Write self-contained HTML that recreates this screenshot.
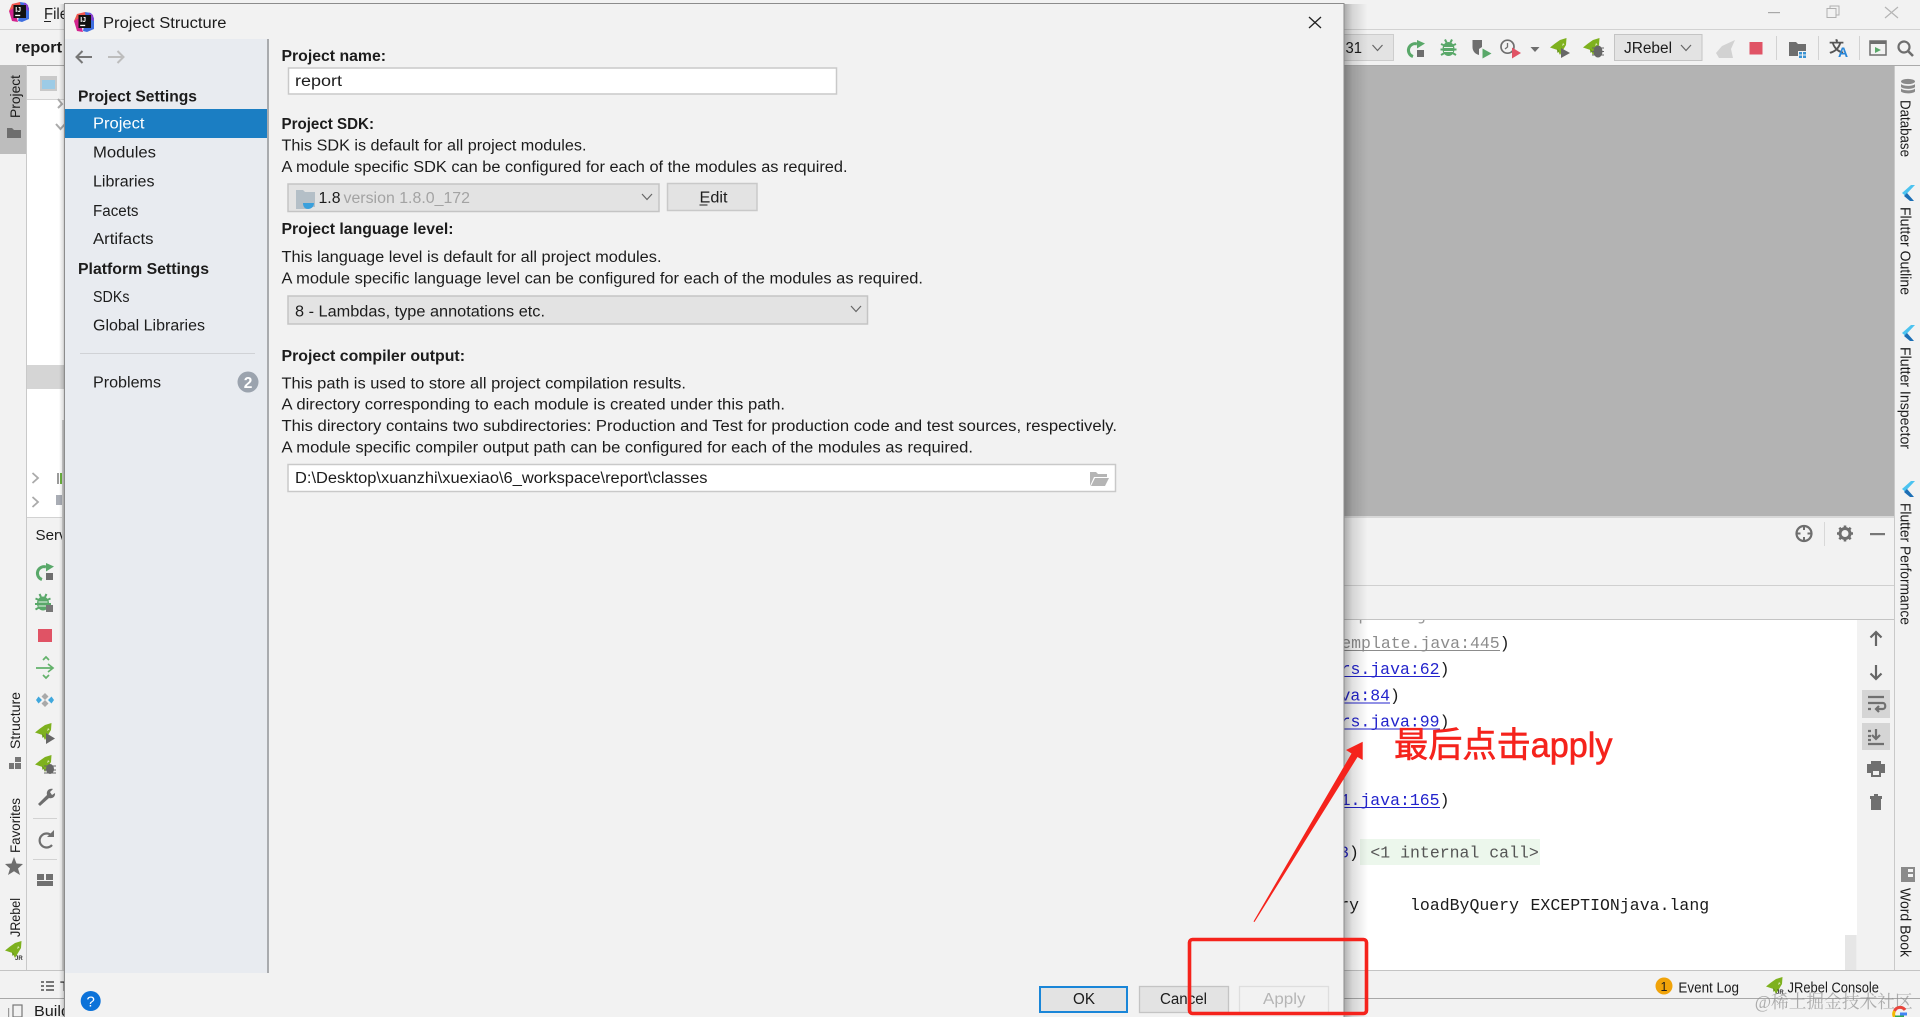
<!DOCTYPE html>
<html><head><meta charset="utf-8"><title>Project Structure</title>
<style>
html,body{margin:0;padding:0;background:#f2f2f2;overflow:hidden}
svg{display:block;font-family:"Liberation Sans","Noto Sans CJK SC",sans-serif;font-size:15.5px;fill:#1c1c1c}
.m{font-family:"Liberation Mono",monospace;font-size:16.5px}
.b{font-weight:bold}
</style></head><body>
<svg xmlns="http://www.w3.org/2000/svg" width="1920" height="1017" viewBox="0 0 1920 1017">
<defs>
<linearGradient id="sh" x1="0" x2="1" y1="0" y2="0"><stop offset="0" stop-color="#000" stop-opacity=".3"/><stop offset=".35" stop-color="#000" stop-opacity=".12"/><stop offset="1" stop-color="#000" stop-opacity="0"/></linearGradient>
<g id="idea"><path d="M3 2 L11 0 L13 5 L4 12 L0 9 Z" fill="#f0574f"/><path d="M0 9 L5 6 L9 20 L3 19 Z" fill="#d3258f"/><path d="M11 0 L17 1 L20 6 L20 17 L13 20 L9 19 L12 6 Z" fill="#3f6fe0"/><path d="M15 0.500 L19 3 L20 9 L15 7 Z" fill="#8c3fd0"/><rect x="4.500" y="3" width="12.500" height="13" fill="#111"/><text x="6.200" y="10" style="font-size:7px;font-weight:bold;fill:#fff">IJ</text><rect x="6.200" y="12.800" width="5" height="1.300" fill="#fff"/></g>
<g id="rerun"><path d="M1 -5 A6.500 6.500 0 1 0 -3 7.500" fill="none" stroke="#59a869" stroke-width="3"/><path d="M1 -9 L9 -5.500 L1 -.5 Z" fill="#59a869"/><rect x="1" y="1" width="7" height="7" fill="#6e6e6e"/></g>
<g id="bug"><ellipse cx="0" cy="0.500" rx="6" ry="7" fill="#59a869"/><path d="M-7.500 -4.500 L-4 -3 M7.500 -4.500 L4 -3 M-8 1 H8 M-7.500 6.500 L-4 4.500 M7.500 6.500 L4 4.500 M-3.500 -9 L-2 -6 M3.500 -9 L2 -6" stroke="#59a869" stroke-width="2"/><path d="M-4.500 -1 H4.500 M-4.500 3 H4.500" stroke="#e9f3ea" stroke-width="1.100"/></g>
<g id="rocket"><path d="M6.500 -9 L6 -2 L3 3 L0 8 L-2.500 3 L-10 0.500 L-5 -3.500 L0 -7 Z" fill="#7eb11e"/><path d="M3 -4 L4.500 -2.500 L2 -1 Z" fill="#d8e8b0"/><path d="M-3 2 L-1 4 L-2.500 6 Z" fill="#5c8a14"/></g>
<path id="chev" d="M-5 -3 L0 2.500 L5 -3" fill="none" stroke="#666" stroke-width="1.200"/>
<g id="flutter"><path d="M7 -8 L-2 0 L1 2.500 L11 -8 Z" fill="#4cc3f0"/><path d="M0 3 L6 8 L10 8 L3 0 Z" fill="#1d6fb5"/></g>
</defs>

<!-- IDE background -->
<rect width="1920" height="1017" fill="#f2f2f2"/>
<rect y="29" width="1920" height="1" fill="#d2d2d2"/>
<rect y="65" width="1920" height="1" fill="#aaaaaa"/>
<use href="#idea" x="9" y="2"/>
<text x="44" y="19" textLength="24" lengthAdjust="spacingAndGlyphs">File</text><rect x="44" y="21" width="7" height="1" fill="#222"/>
<text class="b" x="15" y="52.500" textLength="47" lengthAdjust="spacingAndGlyphs">report</text>

<!-- left stripe -->
<rect x="0" y="65" width="26" height="89" fill="#bdbdbd"/>
<rect x="26" y="65" width="1" height="905" fill="#c9c9c9"/>
<text transform="translate(20,118) rotate(-90)" style="font-size:14px" textLength="43" lengthAdjust="spacingAndGlyphs">Project</text>
<path d="M7 128 H12 L14 130 H21 V138 H7 Z" fill="#6e6e6e"/>
<text transform="translate(20,749) rotate(-90)" style="font-size:14px" textLength="57" lengthAdjust="spacingAndGlyphs">Structure</text>
<path d="M9 763 h5 v6 h-5z M15 763 h6 v6 h-6z M15 757 h6 v5 h-6z" fill="#777"/>
<text transform="translate(20,853) rotate(-90)" style="font-size:14px" textLength="55" lengthAdjust="spacingAndGlyphs">Favorites</text>
<path d="M14 857 L16.500 863.500 L23 864 L18 868.500 L20 875 L14 871.300 L8 875 L10 868.500 L5 864 L11.500 863.500 Z" fill="#6e6e6e"/>
<text transform="translate(20,937) rotate(-90)" style="font-size:14px" textLength="39" lengthAdjust="spacingAndGlyphs">JRebel</text>
<use href="#rocket" x="15" y="950"/><text x="15" y="960" style="font-size:6px;font-weight:bold;fill:#333">JR</text>

<!-- project panel -->
<rect x="27" y="66" width="40" height="34" fill="#f2f2f2"/>
<rect x="27" y="99" width="40" height="1" fill="#d4d4d4"/>
<rect x="27" y="100" width="40" height="417" fill="#fff"/>
<rect x="27" y="365" width="40" height="24" fill="#d5d5d5"/>
<rect x="40" y="76" width="17" height="15" fill="#c9c9c9"/><rect x="42" y="80" width="13" height="9" fill="#9ccbe6"/>
<path d="M58 99 L62 104 L58 108" fill="none" stroke="#aaa" stroke-width="2"/>
<path d="M56 124 L60.500 129 L65 124" fill="none" stroke="#aaa" stroke-width="2"/>
<path d="M32.500 473 L38 478 L32.500 483 M32.500 497 L38 502 L32.500 507" fill="none" stroke="#aaa" stroke-width="1.800"/>
<rect x="57" y="473" width="2" height="11" fill="#9a9a9a"/><rect x="60" y="473" width="3" height="11" fill="#6cb33f"/>
<rect x="56" y="495" width="8" height="10" fill="#a9adb5"/>
<rect x="27" y="517" width="40" height="1" fill="#d2d2d2"/>
<text x="35.500" y="540" style="font-size:15px" textLength="58" lengthAdjust="spacingAndGlyphs">Services</text>

<!-- left tool icons -->
<use href="#rerun" x="45" y="572"/>
<g transform="translate(43,603)"><use href="#bug"/></g><rect x="46" y="605" width="7" height="7" fill="#777"/>
<rect x="38" y="629" width="14" height="13" fill="#e05365"/>
<path d="M36 668 H52 M48 664 L53 668 L48 672 M43 660 L46 657 L49 660 M43 675 L46 678 L49 675" fill="none" stroke="#63b26b" stroke-width="1.700"/>
<path d="M45 693 L48.500 696.500 L45 700 L41.500 696.500 Z M45 700 L48.500 703.500 L45 707 L41.500 703.500 Z" fill="#a9a9a9"/><path d="M38.500 696.500 L42 700 L38.500 703.500 L36 700 Z M51.500 696.500 L54 700 L51.500 703.500 L48 700 Z" fill="#40a8dd"/>
<use href="#rocket" x="45" y="732"/><path d="M46 733 L55 738.500 L46 744 Z" fill="#666"/>
<use href="#rocket" x="45" y="764"/><ellipse cx="50" cy="769" rx="4" ry="5" fill="#666"/><path d="M44 766 H56 M44 770 H56 M44 773 H56" stroke="#666" stroke-width="1"/>
<path d="M38 804 L47 795 C46 791 49 788 53 789 L50 792 L52 795 L55 793 C55.500 797 52 799 49 798 L40 806 Z" fill="#6e6e6e"/>
<rect x="33" y="818" width="24" height="1" fill="#d2d2d2"/>
<path d="M52 836 A7 7 0 1 0 52 845" fill="none" stroke="#707070" stroke-width="2.200"/><path d="M47 837 H54 V830 Z" fill="#707070"/>
<rect x="33" y="859" width="24" height="1" fill="#d2d2d2"/>
<path d="M37 874 h7 v6 h-7z M46 874 h7 v6 h-7z M37 881 h16 v5 h-16z" fill="#707070"/>
<rect x="62" y="420" width="3" height="550" fill="#d0d0d0"/>

<!-- bottom strip -->
<rect y="970" width="1920" height="1" fill="#c4c4c4"/>
<rect y="998" width="1920" height="1" fill="#a8a8a8"/>
<path d="M41 981 h3 v2 h-3z M46 981 h8 v2 h-8z M41 985 h3 v2 h-3z M46 985 h8 v2 h-8z M41 989 h3 v2 h-3z M46 989 h8 v2 h-8z" fill="#777"/>
<text x="60" y="991" style="font-size:14px">TODO</text>
<rect x="13" y="1005" width="9" height="12" fill="none" stroke="#777" stroke-width="1.200"/><rect x="8" y="1008" width="1.200" height="9" fill="#999"/>
<text x="34" y="1016" style="font-size:15px" textLength="36" lengthAdjust="spacingAndGlyphs">Build</text>

<!-- editor gray -->
<rect x="1344" y="66" width="550" height="450" fill="#b3b3b3"/>

<!-- top toolbar right -->
<rect x="1344" y="34.500" width="49.500" height="26" fill="#e3e3e3" stroke="#cdcdcd"/>
<text x="1345.500" y="53" textLength="16.500" lengthAdjust="spacingAndGlyphs">31</text>
<use href="#chev" x="1377.500" y="48"/>
<use href="#rerun" x="1416" y="49"/>
<g transform="translate(1448.500,48.500)"><use href="#bug"/></g>
<path d="M1472.500 40 H1482 V47 L1479 49 V55 C1475 54 1472.500 51 1472.500 47 Z" fill="#6e6e6e"/><path d="M1482.500 48.500 L1491.500 53.500 L1482.500 58.500 Z" fill="#59a869"/>
<circle cx="1507.500" cy="46.700" r="6.500" fill="none" stroke="#6e6e6e" stroke-width="1.700"/><path d="M1507.500 43 V47 L1505 49" fill="none" stroke="#6e6e6e" stroke-width="1.300"/><path d="M1512 47.500 L1521 53 L1512 58.500 Z" fill="#e05365"/>
<path d="M1530.500 47 H1539.500 L1535 52 Z" fill="#6e6e6e"/>
<use href="#rocket" x="1560" y="47"/><path d="M1561 48 L1570 53 L1561 58 Z" fill="#666"/>
<use href="#rocket" x="1593" y="47"/><ellipse cx="1598" cy="51.500" rx="4.500" ry="6" fill="#666"/><path d="M1592 48 H1604 M1592 51.500 H1604 M1592 55 H1604" stroke="#666" stroke-width="1"/>
<rect x="1614.500" y="34.500" width="87.500" height="26" fill="#e3e3e3" stroke="#c4c4c4"/>
<text x="1624" y="53" textLength="48" lengthAdjust="spacingAndGlyphs">JRebel</text>
<use href="#chev" x="1686" y="48"/>
<path d="M1735 40 L1731 49 L1733 58 H1719 L1716 53 L1722 46 Z" fill="#d2d2d2"/>
<rect x="1749.500" y="42" width="13" height="12.500" fill="#e05365"/>
<rect x="1776" y="36" width="1" height="24" fill="#d2d2d2"/><rect x="1818" y="36" width="1" height="24" fill="#d2d2d2"/><rect x="1859" y="36" width="1" height="24" fill="#d2d2d2"/>
<path d="M1789 42 H1796 L1798 44 H1806 V51 H1798 V56 H1789 Z" fill="#6e6e6e"/><path d="M1799 52 h3 v2.500 h-3z M1803 52 h3 v2.500 h-3z M1799 55.500 h3 v2.500 h-3z M1803 55.500 h3 v2.500 h-3z" fill="#3a93d3"/>
<text x="1829" y="52" style="font-size:15px;font-weight:bold;fill:#555">文</text><text x="1838" y="57" style="font-size:14px;font-weight:bold;fill:#2a87d8">A</text>
<rect x="1870" y="41" width="16" height="14" fill="none" stroke="#6e6e6e" stroke-width="1.500"/><rect x="1870" y="41" width="16" height="3" fill="#6e6e6e"/><path d="M1875 47 L1881 50 L1875 53 Z" fill="#59a869"/>
<circle cx="1904" cy="47" r="5.500" fill="none" stroke="#6e6e6e" stroke-width="2.200"/><path d="M1908 51 L1913 56" stroke="#6e6e6e" stroke-width="2.600"/>
<!-- window controls -->
<rect x="1768" y="12" width="12" height="1.200" fill="#a8a8a8"/>
<rect x="1827" y="8.500" width="9" height="9" fill="none" stroke="#b0b0b0"/><path d="M1830 8 V6 H1839 V15 H1836.500" fill="none" stroke="#b0b0b0"/>
<path d="M1885 7 L1898 18 M1898 7 L1885 18" stroke="#b5b5b5" stroke-width="1.200"/>

<!-- right stripe -->
<rect x="1894" y="66" width="1" height="904" fill="#c9c9c9"/>
<ellipse cx="1908" cy="81.500" rx="7" ry="2.600" fill="#8a8a8a"/><path d="M1901 84 C1903 86.500 1913 86.500 1915 84 V87 C1913 89.500 1903 89.500 1901 87Z M1901 88.500 C1903 91 1913 91 1915 88.500 V91.500 C1913 94 1903 94 1901 91.500Z" fill="#8a8a8a"/>
<text transform="translate(1900.500,100) rotate(90)" style="font-size:14.500px" textLength="57" lengthAdjust="spacingAndGlyphs">Database</text>
<use href="#flutter" x="1904" y="193"/>
<text transform="translate(1900.500,207) rotate(90)" style="font-size:14.500px" textLength="88" lengthAdjust="spacingAndGlyphs">Flutter Outline</text>
<use href="#flutter" x="1904" y="333"/>
<text transform="translate(1900.500,347) rotate(90)" style="font-size:14.500px" textLength="102" lengthAdjust="spacingAndGlyphs">Flutter Inspector</text>
<use href="#flutter" x="1904" y="489"/>
<text transform="translate(1900.500,503) rotate(90)" style="font-size:14.500px" textLength="122" lengthAdjust="spacingAndGlyphs">Flutter Performance</text>
<rect x="1901" y="867" width="14" height="15" fill="#8a8a8a"/><rect x="1908" y="869" width="5" height="3" fill="#f2f2f2"/><rect x="1908" y="874" width="5" height="3" fill="#f2f2f2"/>
<text transform="translate(1900.500,888) rotate(90)" style="font-size:14.500px" textLength="69" lengthAdjust="spacingAndGlyphs">Word Book</text>

<!-- lower panel -->
<rect x="1344" y="516" width="550" height="2" fill="#d8d8d8"/>
<circle cx="1804" cy="533.500" r="7.500" fill="none" stroke="#6e6e6e" stroke-width="2.200"/><path d="M1804 526 V530 M1804 537 V541 M1796.500 533.500 H1800.500 M1807.500 533.500 H1811.500" stroke="#6e6e6e" stroke-width="2"/>
<rect x="1824" y="522" width="1" height="24" fill="#d8d8d8"/>
<circle cx="1845" cy="533.500" r="5" fill="none" stroke="#6e6e6e" stroke-width="3"/><path d="M1845 525.500 V529 M1845 538 V541.500 M1837 533.500 H1840.500 M1849.500 533.500 H1853 M1839.300 527.800 L1841.500 530 M1850.700 539.200 L1848.500 537 M1850.700 527.800 L1848.500 530 M1839.300 539.200 L1841.500 537" stroke="#6e6e6e" stroke-width="2.600"/>
<rect x="1870" y="533" width="15" height="2.200" fill="#777"/>
<rect x="1344" y="585" width="550" height="1" fill="#d0d0d0"/>
<rect x="1344" y="619" width="550" height="1" fill="#c4c4c4"/>

<!-- console -->
<rect x="1344" y="620" width="513" height="350" fill="#fff"/>
<rect x="1845" y="935" width="11.700" height="35" fill="#e6e6e6"/>
<rect x="1857" y="620" width="37" height="350" fill="#f2f2f2"/>
<svg x="1300" y="620" width="557" height="350" viewBox="1300 620 557 350" style="overflow:hidden">
<text class="m" x="1497" y="620" text-anchor="end" style="fill:#999">emplate.java:666</text>
<text class="m" x="1499.700" y="648" text-anchor="end" style="fill:#8c8c8c">emplate.java:445</text><rect x="1344" y="650" width="156" height="1" fill="#8c8c8c"/><text class="m" x="1499.700" y="648">)</text>
<text class="m" x="1439.600" y="674" text-anchor="end" style="fill:#2323cc">rs.java:62</text><rect x="1344" y="676" width="96" height="1" fill="#2323cc"/><text class="m" x="1439.600" y="674">)</text>
<text class="m" x="1390" y="700.500" text-anchor="end" style="fill:#2323cc">va:84</text><rect x="1344" y="702.500" width="46" height="1" fill="#2323cc"/><text class="m" x="1390" y="700.500">)</text>
<text class="m" x="1439.600" y="726.500" text-anchor="end" style="fill:#2323cc">rs.java:99</text><rect x="1344" y="728.500" width="96" height="1" fill="#2323cc"/><text class="m" x="1439.600" y="726.500">)</text>
<text class="m" x="1439.600" y="805" text-anchor="end" style="fill:#2323cc">1.java:165</text><rect x="1344" y="807" width="96" height="1" fill="#2323cc"/><text class="m" x="1439.600" y="805">)</text>
<rect x="1360" y="839" width="180" height="26" fill="#ecf7ec"/>
<text class="m" x="1349" y="857.500" text-anchor="end" style="fill:#2323cc">3</text><text class="m" x="1349" y="857.500">)</text>
<text class="m" x="1370.400" y="857.500" textLength="168.400" style="fill:#555">&lt;1 internal call&gt;</text>
<text class="m" x="1359" y="910" text-anchor="end">ry</text>
<text class="m" x="1410" y="910" textLength="109">loadByQuery</text>
<text class="m" x="1530.500" y="910" textLength="178.700">EXCEPTIONjava.lang</text>
</svg>

<!-- console side toolbar -->
<path d="M1876 632 V646 M1870.500 637.500 L1876 632 L1881.500 637.500" fill="none" stroke="#666" stroke-width="2.200"/>
<path d="M1876 665 V679 M1870.500 673.500 L1876 679 L1881.500 673.500" fill="none" stroke="#666" stroke-width="2.200"/>
<rect x="1862" y="690" width="28" height="28" fill="#d5d5d5"/>
<path d="M1868 697 H1884 M1868 703 H1883 C1886 703 1886 709 1883 709 H1876 M1879 706 L1876 709 L1879 712 M1868 709 H1871" fill="none" stroke="#707070" stroke-width="2.200"/>
<rect x="1862" y="723" width="28" height="27" fill="#d5d5d5"/>
<path d="M1868 744 H1884 M1876 729 V739 M1872 735 L1876 739 L1880 735 M1868 731 H1871 M1868 736 H1871 M1868 740 H1871" fill="none" stroke="#707070" stroke-width="2.200"/>
<path d="M1871 761 H1881 V764 H1885 V773 H1881 V777 H1871 V773 H1867 V764 H1871 Z" fill="#707070"/><rect x="1873" y="771" width="6" height="4" fill="#f2f2f2"/>
<path d="M1870 796 H1882 V799 H1881 V810 H1871 V799 H1870 Z M1874 794 H1878 V796 H1874Z" fill="#707070"/>

<!-- status tool buttons -->
<circle cx="1664" cy="986" r="8.500" fill="#f0a30a"/><text x="1664" y="991" text-anchor="middle" style="font-size:12.500px">1</text>
<text x="1678.400" y="992.700" style="font-size:15px" textLength="60.600" lengthAdjust="spacingAndGlyphs">Event Log</text>
<use href="#rocket" x="1776" y="986"/><text x="1776" y="994" style="font-size:6px;font-weight:bold;fill:#333">JR</text>
<text x="1787.500" y="992.700" style="font-size:15px" textLength="91.500" lengthAdjust="spacingAndGlyphs">JRebel Console</text>

<!-- dialog shadow -->
<rect x="1344" y="4" width="24" height="1013" fill="url(#sh)"/>
<rect x="59" y="4" width="6" height="1013" fill="url(#sh)" transform="matrix(-1 0 0 1 124 0)"/>

<!-- dialog -->
<rect x="64.500" y="3.500" width="1279.500" height="1014" fill="#f2f2f2" stroke="#8c8c8c"/>
<use href="#idea" x="74" y="12"/>
<text x="103" y="28" textLength="123.500" lengthAdjust="spacingAndGlyphs" style="font-size:15.500px">Project Structure</text>
<path d="M1309 17 L1321 28 M1321 17 L1309 28" stroke="#222" stroke-width="1.300"/>

<!-- sidebar -->
<rect x="65" y="39" width="202" height="934" fill="#e8ebf0"/>
<rect x="267" y="39" width="2" height="934" fill="#a9abae"/>
<path d="M92 57 H77 M82.500 51 L76.500 57 L82.500 63" fill="none" stroke="#777" stroke-width="2"/>
<path d="M108 57 H123 M117.500 51 L123.500 57 L117.500 63" fill="none" stroke="#bdbdbd" stroke-width="2"/>
<text class="b" x="78" y="101.500" textLength="119" lengthAdjust="spacingAndGlyphs">Project Settings</text>
<rect x="65" y="109" width="202" height="29" fill="#1b7ec3"/>
<text x="93" y="128.500" style="fill:#fff" textLength="51.500" lengthAdjust="spacingAndGlyphs">Project</text>
<text x="93" y="157.500" textLength="63" lengthAdjust="spacingAndGlyphs">Modules</text>
<text x="93" y="186.500" textLength="61.500" lengthAdjust="spacingAndGlyphs">Libraries</text>
<text x="93" y="216" textLength="45.500" lengthAdjust="spacingAndGlyphs">Facets</text>
<text x="93" y="244" textLength="60.500" lengthAdjust="spacingAndGlyphs">Artifacts</text>
<text class="b" x="78" y="274" textLength="131" lengthAdjust="spacingAndGlyphs">Platform Settings</text>
<text x="93" y="302" textLength="36.500" lengthAdjust="spacingAndGlyphs">SDKs</text>
<text x="93" y="330.500" textLength="112" lengthAdjust="spacingAndGlyphs">Global Libraries</text>
<rect x="80" y="353" width="175" height="1" fill="#d0d2d6"/>
<text x="93" y="387.500" textLength="68" lengthAdjust="spacingAndGlyphs">Problems</text>
<circle cx="248" cy="382" r="10.500" fill="#9ba3ae"/><text x="248" y="388" text-anchor="middle" class="b" style="font-size:15.500px;fill:#fff">2</text>
<circle cx="90.700" cy="1001" r="10" fill="#0b72d9"/><text x="90.700" y="1006.500" text-anchor="middle" style="font-size:15px;fill:#fff">?</text>

<!-- main form -->
<text class="b" x="281.500" y="61" textLength="104.500" lengthAdjust="spacingAndGlyphs">Project name:</text>
<rect x="288.500" y="68" width="548" height="26" fill="#fff" stroke="#c9c9c9" stroke-width="1.500"/>
<text x="295" y="86" textLength="47" lengthAdjust="spacingAndGlyphs">report</text>

<text class="b" x="281.500" y="129" textLength="92.500" lengthAdjust="spacingAndGlyphs">Project SDK:</text>
<text x="281.500" y="150.500" textLength="305" lengthAdjust="spacingAndGlyphs">This SDK is default for all project modules.</text>
<text x="281.500" y="172" textLength="566" lengthAdjust="spacingAndGlyphs">A module specific SDK can be configured for each of the modules as required.</text>
<rect x="288" y="184" width="371" height="27.500" fill="#e3e3e3" stroke="#c4c4c4" stroke-width="1.500"/>
<path d="M296 190 H303 L305 192 H315 V207 H307 V209 H296 Z" fill="#b4bfc7"/><path d="M303 203 H314 C314 207 311 209 308 209 C305 209 303 207 303 203 Z" fill="#3aa0dc"/>
<text x="318.500" y="203" textLength="22" lengthAdjust="spacingAndGlyphs">1.8</text>
<text x="343.500" y="203" style="fill:#a3a3a3" textLength="126.500" lengthAdjust="spacingAndGlyphs">version 1.8.0_172</text>
<use href="#chev" x="647" y="197"/>
<rect x="667.500" y="183.500" width="89.500" height="27" fill="#e3e3e3" stroke="#c9c9c9" stroke-width="1.500"/>
<text x="699.500" y="202.500" textLength="28" lengthAdjust="spacingAndGlyphs">Edit</text><rect x="699.500" y="204.500" width="8" height="1" fill="#222"/>

<text class="b" x="281.500" y="234" textLength="172" lengthAdjust="spacingAndGlyphs">Project language level:</text>
<text x="281.500" y="262" textLength="380" lengthAdjust="spacingAndGlyphs">This language level is default for all project modules.</text>
<text x="281.500" y="283.500" textLength="641.500" lengthAdjust="spacingAndGlyphs">A module specific language level can be configured for each of the modules as required.</text>
<rect x="288" y="296" width="579.500" height="28" fill="#e3e3e3" stroke="#c4c4c4" stroke-width="1.500"/>
<text x="295" y="316.500" textLength="250" lengthAdjust="spacingAndGlyphs">8 - Lambdas, type annotations etc.</text>
<use href="#chev" x="856" y="309"/>

<text class="b" x="281.500" y="361" textLength="183.500" lengthAdjust="spacingAndGlyphs">Project compiler output:</text>
<text x="281.500" y="388.500" textLength="404.500" lengthAdjust="spacingAndGlyphs">This path is used to store all project compilation results.</text>
<text x="281.500" y="409.500" textLength="503.500" lengthAdjust="spacingAndGlyphs">A directory corresponding to each module is created under this path.</text>
<text x="281.500" y="431" textLength="835.500" lengthAdjust="spacingAndGlyphs">This directory contains two subdirectories: Production and Test for production code and test sources, respectively.</text>
<text x="281.500" y="452.500" textLength="691.500" lengthAdjust="spacingAndGlyphs">A module specific compiler output path can be configured for each of the modules as required.</text>
<rect x="288" y="464.500" width="827.500" height="27" fill="#fff" stroke="#c9c9c9" stroke-width="1.500"/>
<text x="295" y="483" textLength="412.500" lengthAdjust="spacingAndGlyphs">D:\Desktop\xuanzhi\xuexiao\6_workspace\report\classes</text>
<path d="M1090 472 H1096 L1098 474 H1107 V477 H1094 L1090 486 Z M1095 478 H1109 L1105 486 H1091 Z" fill="#b5b5b5"/>

<!-- dialog buttons -->
<rect x="1040" y="987" width="87" height="25" fill="#e3e3e3" stroke="#1a86d8" stroke-width="2"/>
<text x="1084" y="1004" text-anchor="middle" textLength="22" lengthAdjust="spacingAndGlyphs">OK</text>
<rect x="1139.500" y="986.500" width="89" height="26" fill="#e3e3e3" stroke="#c4c4c4" stroke-width="1.300"/>
<text x="1160" y="1004" textLength="47" lengthAdjust="spacingAndGlyphs">Cancel</text>
<rect x="1239.500" y="986.500" width="89" height="26" fill="#f2f2f2" stroke="#dedede" stroke-width="1.300"/>
<text x="1263" y="1004" style="fill:#b5b5b5" textLength="42.500" lengthAdjust="spacingAndGlyphs">Apply</text>

<!-- annotations -->
<rect x="1189.500" y="939.500" width="177" height="74" rx="3" fill="none" stroke="#f5231c" stroke-width="3.600"/>
<path d="M1253.500 921.500 L1351.500 753.500 L1346 750 L1362.700 741.700 L1362.700 760 L1357.500 757 L1254.500 922 Z" fill="#f5231c"/>
<text x="1394" y="757" style="font-size:35px;fill:#f5231c;stroke:#f5231c;stroke-width:.6" textLength="218.500" lengthAdjust="spacingAndGlyphs">最后点击apply</text>

<!-- watermark -->
<text x="1754.700" y="1008" style="font-size:18px;fill:#8f8f8f;fill-opacity:.7;font-family:'Liberation Serif','Noto Serif CJK SC',serif" textLength="158" lengthAdjust="spacingAndGlyphs">@稀土掘金技术社区</text>
<path d="M1905 1010 A6 6 0 0 0 1894.500 1011" fill="none" stroke="#e8453c" stroke-width="3"/><path d="M1894.500 1011 A6 6 0 0 0 1894.500 1017" fill="none" stroke="#f5b800" stroke-width="3"/><rect x="1900" y="1012.500" width="7" height="3" fill="#4285f4"/><rect x="1895" y="1015.500" width="9" height="1.500" fill="#34a853"/>
</svg>
</body></html>
